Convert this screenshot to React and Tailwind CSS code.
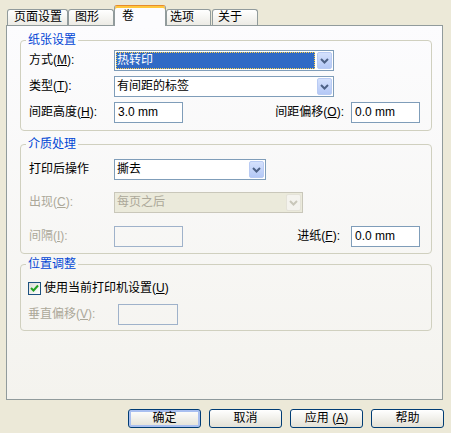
import React from 'react';

const Mn = ({ ch }) => <span className="underline">{ch}</span>;

const Arrow = ({ disabled }) => (
  <svg width="9" height="6" viewBox="0 0 9 6">
    <path d="M1 1 L4.5 4.5 L8 1" fill="none" stroke={disabled ? '#c9c7ba' : '#4d6185'} strokeWidth="2" />
  </svg>
);

const Combo = ({ value, w, selected, disabled }) => (
  <div className={`${w} h-[21px] flex p-[1px] border ${disabled ? 'border-[#c9c7ba] bg-[#ebeadb] text-[#aca899]' : 'border-[#7f9db9] bg-white text-black'}`}>
    <div className={`flex-1 flex items-center pl-[1px] mr-[2px] ${selected ? 'bg-[#316ac5] text-white outline-1 outline-dotted outline-[#ffd24a] -outline-offset-1' : ''}`}>
      {value}
    </div>
    <div className={`w-[15px] h-[17px] rounded-[2px] border flex items-center justify-center ${disabled ? 'border-[#e4e2d8] bg-[#f4f3ee]' : 'border-[#b9cbf3] bg-linear-to-b from-[#d5e1fc] to-[#b4c8f6]'}`}>
      <Arrow disabled={disabled} />
    </div>
  </div>
);

const Input = ({ w, value, disabled }) => (
  <div className={`${w} h-[21px] flex items-center pl-[3px] border ${disabled ? 'border-[#9fb2ca]' : 'border-[#7f9db9] bg-white'}`}>
    {value}
  </div>
);

const Tab = ({ label, w, pl, active }) =>
  active ? (
    <div className={`${w} ${pl} h-[21px] -mb-[1px] relative z-10 flex items-center border border-[#919b9c] border-b-0 border-t-[#e68b2c] rounded-t-[3px] bg-[#fcfcfe] shadow-[inset_0_2px_0_#ffc73c]`}>
      {label}
    </div>
  ) : (
    <div className={`${w} ${pl} h-[16px] flex items-center border border-[#919b9c] border-b-0 rounded-t-[3px] bg-linear-to-b from-white to-[#ecebe5]`}>
      {label}
    </div>
  );

const Btn = ({ children, def }) => (
  <button className={`w-[73px] h-[19px] flex items-center justify-center border border-[#003c74] rounded-[3px] bg-linear-to-b from-white to-[#e3e1d6] text-black ${def ? 'shadow-[inset_0_0_0_2px_#a9bff0]' : ''}`}>
    {children}
  </button>
);

export default function App() {
  return (
    <div className="w-[451px] h-[433px] bg-[#ece9d8] text-[12px] leading-[13px] text-black font-['Liberation_Sans','Noto_Sans_CJK_SC',sans-serif] overflow-hidden">
      <div className="h-[25px] flex items-end pl-[7px]">
        <Tab label="页面设置" w="w-[61px]" pl="pl-[6px]" />
        <Tab label="图形" w="w-[46px]" pl="pl-[6px]" />
        <Tab label="卷" w="w-[52px]" pl="pl-[7px]" active />
        <Tab label="选项" w="w-[45px]" pl="pl-[3px]" />
        <Tab label="关于" w="w-[46px]" pl="pl-[5px] ml-[1px]" />
      </div>

      <div className="ml-[6px] w-[437px] h-[375px] border border-[#919b9c] bg-linear-to-b from-[#fcfcfe] to-[#f4f3ee]">
        <fieldset className="mt-[8px] ml-[13px] w-[412px] border border-[#d0d0bf] rounded-[4px] pl-[8px] pr-[11px] pb-[7px]">
          <legend className="-ml-[3px] px-[2px] text-[#0046d5]">纸张设置</legend>
          <div className="mt-[3px] h-[21px] flex items-center">
            <div className="w-[85px]">方式(<Mn ch="M" />):</div>
            <Combo w="w-[220px]" value="热转印" selected />
          </div>
          <div className="mt-[5px] h-[21px] flex items-center">
            <div className="w-[85px]">类型(<Mn ch="T" />):</div>
            <Combo w="w-[220px]" value="有间距的标签" />
          </div>
          <div className="mt-[5px] h-[21px] flex items-center">
            <div className="w-[85px]">间距高度(<Mn ch="H" />):</div>
            <Input w="w-[69px]" value="3.0 mm" />
            <div className="ml-auto mr-[7px]">间距偏移(<Mn ch="O" />):</div>
            <Input w="w-[69px]" value="0.0 mm" />
          </div>
        </fieldset>

        <fieldset className="mt-[7px] ml-[13px] w-[412px] border border-[#d0d0bf] rounded-[4px] pl-[8px] pr-[11px] pb-[6px]">
          <legend className="-ml-[3px] px-[2px] text-[#0046d5]">介质处理</legend>
          <div className="mt-[8px] h-[21px] flex items-center">
            <div className="w-[85px]">打印后操作</div>
            <Combo w="w-[152px]" value="撕去" />
          </div>
          <div className="mt-[12px] h-[21px] flex items-center">
            <div className="w-[85px] text-[#aca899]">出现(<Mn ch="C" />):</div>
            <Combo w="w-[189px]" value="每页之后" disabled />
          </div>
          <div className="mt-[13px] h-[21px] flex items-center">
            <div className="w-[85px] text-[#aca899]">间隔(<Mn ch="I" />):</div>
            <Input w="w-[69px]" disabled />
            <div className="ml-auto mr-[11px]">进纸(<Mn ch="F" />):</div>
            <Input w="w-[69px]" value="0.0 mm" />
          </div>
        </fieldset>

        <fieldset className="mt-[4px] ml-[13px] w-[412px] border border-[#d0d0bf] rounded-[4px] pl-[7px] pr-[11px] pb-[5px]">
          <legend className="-ml-[2px] px-[2px] text-[#0046d5]">位置调整</legend>
          <div className="mt-[11px] h-[13px] flex items-center">
            <div className="w-[13px] h-[13px] border border-[#1c5180] bg-linear-to-br from-[#dcdcd7] to-white flex items-center justify-center">
              <svg width="9" height="9" viewBox="0 0 9 9">
                <path d="M1 4 L3.5 6.5 L8 1.5" fill="none" stroke="#21a121" strokeWidth="2" />
              </svg>
            </div>
            <div className="ml-[3px]">使用当前打印机设置(<Mn ch="U" />)</div>
          </div>
          <div className="mt-[9px] h-[21px] flex items-center">
            <div className="w-[90px] text-[#aca899]">垂直偏移(<Mn ch="V" />):</div>
            <Input w="w-[60px]" disabled />
          </div>
        </fieldset>
      </div>

      <div className="mt-[9px] pl-[128px] flex gap-[8px]">
        <Btn def>确定</Btn>
        <Btn>取消</Btn>
        <Btn>应用 (<Mn ch="A" />)</Btn>
        <Btn>帮助</Btn>
      </div>
    </div>
  );
}
